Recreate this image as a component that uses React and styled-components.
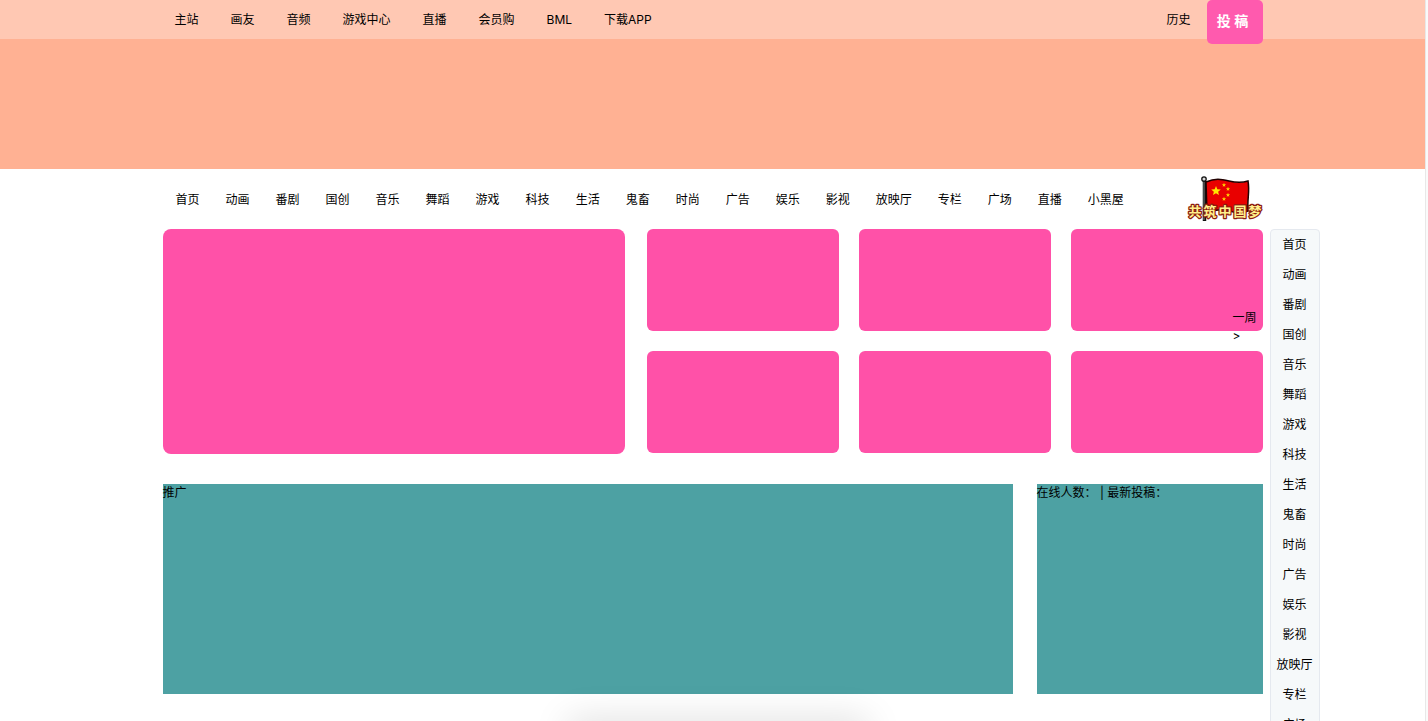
import React from 'react';
import styled, { createGlobalStyle } from 'styled-components';

const Global = createGlobalStyle`
  * { box-sizing: border-box; }
  body {
    margin: 0;
    background: #fff;
    color: #000;
    font: 12px/18px Inter, "Noto Sans CJK SC", sans-serif;
  }
  ul { margin: 0; padding: 0; list-style: none; }
`;

const Window = styled.div`
  position: relative;
  display: flex;
  height: 100vh;
  overflow: hidden;
`;

const Page = styled.div`
  flex: 1;
  overflow-y: auto;
  scrollbar-width: none;
`;

const Track = styled.div`
  width: 3px;
  background: #fafafa;
  border-left: 1px solid #e8e8e8;
`;

const Container = styled.div`
  position: relative;
  width: 1100px;
  max-width: 100%;
  margin: 0 auto;
`;

const Banner = styled.header`
  height: 169px;
  background: #ffb193;
`;

const TopBar = styled.div`
  height: 39px;
  background: #ffc8b3;
`;

const TopRow = styled(Container)`
  display: flex;
  justify-content: space-between;
  align-items: flex-start;
  padding-left: 12px;
`;

const TopLinks = styled.ul`
  display: flex;
  gap: 32px;
`;

const Link = styled.a`
  display: block;
  line-height: ${(p) => p.$line}px;
  color: inherit;
  text-decoration: none;
  white-space: nowrap;
`;

const UserArea = styled.div`
  display: flex;
  gap: 16px;
`;

const Upload = styled.button`
  width: 56px;
  height: 44px;
  padding: 0 4px 2px 0;
  border: 0;
  border-radius: 5px;
  background: #ff5aae;
  color: #fff;
  font: bold 14px/40px Inter, "Noto Sans CJK SC", sans-serif;
  white-space: pre;
`;

const NavRow = styled(Container)`
  display: flex;
  justify-content: space-between;
  align-items: center;
  height: 60px;
  padding-top: 2px;
`;

const NavLinks = styled.ul`
  display: flex;
  gap: 26px;
  padding-left: 13px;
`;

const FlagArt = styled.svg`
  display: block;
  width: 76px;
  height: 50px;
`;

const Feature = styled.section`
  display: flex;
  gap: 22px;
`;

const Slide = styled.div`
  flex: 1;
  height: 225px;
  border-radius: 8px;
  background: #ff51a8;
`;

const Cards = styled.div`
  display: grid;
  grid-template-columns: repeat(3, 192px);
  grid-auto-rows: 102px;
  gap: 20px;
`;

const Card = styled.div`
  position: relative;
  border-radius: 6px;
  background: #ff51a8;
`;

const Week = styled.button`
  position: absolute;
  right: 0;
  top: 80px;
  width: 30px;
  padding: 0;
  border: 0;
  background: none;
  color: inherit;
  font: inherit;
  text-align: left;
`;

const Panels = styled.section`
  display: flex;
  gap: 24px;
  margin: 30px 0;
`;

const Panel = styled.div`
  flex: ${(p) => p.$flex};
  height: 210px;
  background: #4da1a3;
`;

const SideNav = styled.nav`
  position: absolute;
  top: 0;
  left: 100%;
  width: 50px;
  margin-left: 7px;
  border: 1px solid #e5e9ef;
  border-radius: 4px;
  background: #f6f9fa;
  text-align: center;
`;

const BottomShade = styled.div`
  position: absolute;
  bottom: -20px;
  left: 50%;
  width: 280px;
  height: 12px;
  margin-left: -136px;
  box-shadow: 0 0 36px 10px rgba(0, 0, 0, 0.13);
`;

const top = ['主站', '画友', '音频', '游戏中心', '直播', '会员购', 'BML', '下载APP'];
const channels = [
  '首页', '动画', '番剧', '国创', '音乐', '舞蹈', '游戏', '科技', '生活', '鬼畜',
  '时尚', '广告', '娱乐', '影视', '放映厅', '专栏', '广场', '直播', '小黑屋',
];

const star = (cx, cy, r) =>
  Array.from({ length: 10 }, (_, i) => {
    const a = (Math.PI / 5) * i - Math.PI / 2;
    const d = i % 2 ? r * 0.45 : r;
    return `${(cx + d * Math.cos(a)).toFixed(2)},${(cy + d * Math.sin(a)).toFixed(2)}`;
  }).join(' ');

function Flag() {
  return (
    <FlagArt viewBox="0 0 76 50" role="img" aria-label="共筑中国梦">
      <path d="M17.5 6V46" stroke="#111" strokeWidth="3.5" />
      <path d="M17 7V45" stroke="#999" strokeWidth="0.8" />
      <circle cx="17" cy="4" r="2.2" fill="#ddd" stroke="#111" strokeWidth="1.3" />
      <path
        d="M19 7C28 3 34 4 42 6S55 8 61 6C63 17 60 24 61 36C51 40 43 36 36 35S25 36 20 38Z"
        fill="#e90000" stroke="#210000" strokeWidth="1.5"
      />
      <polygon points={star(29, 16, 5)} fill="#ffe600" />
      <polygon points={star(37, 10, 2.2)} fill="#ffd000" />
      <polygon points={star(41, 14, 2.2)} fill="#ffd000" />
      <polygon points={star(41, 20, 2.2)} fill="#ffd000" />
      <polygon points={star(37, 24, 2.2)} fill="#ffd000" />
      <text
        y="41" fontSize="13" fontWeight="700" textAnchor="middle"
        fontFamily="Noto Sans CJK SC, sans-serif"
        fill="#fff08c" stroke="#8c1c10" strokeWidth="2.5" strokeLinejoin="round" paintOrder="stroke"
      >
        {['共', '筑', '中', '国', '梦'].map((c, i) => (
          <tspan key={c} x={8 + i * 15}>{c}</tspan>
        ))}
      </text>
    </FlagArt>
  );
}

const Items = ({ names, line }) =>
  names.map((n) => (
    <li key={n}><Link href="#" $line={line}>{n}</Link></li>
  ));

export default function App() {
  return (
    <Window>
      <Global />
      <Page>
        <Banner>
          <TopBar>
            <TopRow>
              <TopLinks><Items names={top} line={40} /></TopLinks>
              <UserArea>
                <Link href="#" $line={40}>历史</Link>
                <Upload type="button">投 稿</Upload>
              </UserArea>
            </TopRow>
          </TopBar>
        </Banner>
        <NavRow as="nav">
          <NavLinks><Items names={channels} line={60} /></NavLinks>
          <Flag />
        </NavRow>
        <Container as="main">
          <Feature>
            <Slide />
            <Cards>
              <Card />
              <Card />
              <Card><Week type="button">一周 &gt;</Week></Card>
              <Card />
              <Card />
              <Card />
            </Cards>
          </Feature>
          <Panels>
            <Panel $flex="1">推广</Panel>
            <Panel $flex="0 0 226px">在线人数： | 最新投稿：</Panel>
          </Panels>
          <SideNav>
            <ul><Items names={channels} line={30} /></ul>
          </SideNav>
        </Container>
      </Page>
      <Track />
      <BottomShade />
    </Window>
  );
}
